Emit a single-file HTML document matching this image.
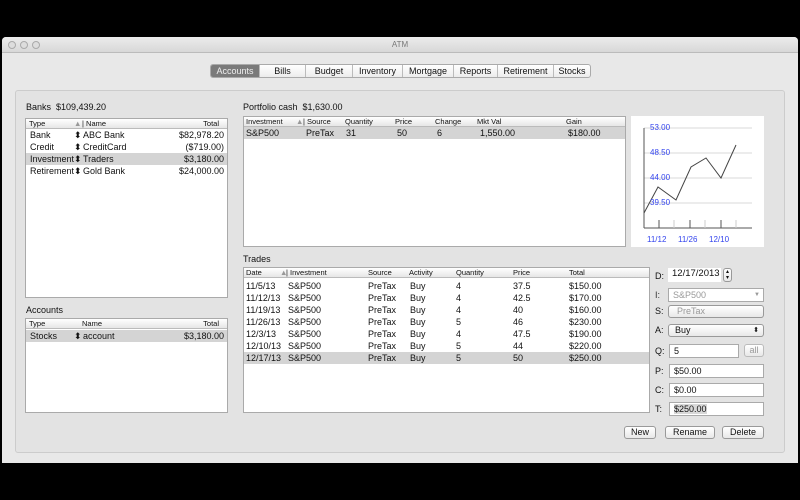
<!DOCTYPE html>
<html><head><meta charset="utf-8"><style>
*{margin:0;padding:0;box-sizing:border-box}
body{width:800px;height:500px;background:#000;position:relative;overflow:hidden;font-family:"Liberation Sans",sans-serif;font-size:9px;color:#111}
.a{position:absolute}
.win{left:2px;top:37px;width:796px;height:426px;background:#e8e8e8;border-radius:4px 4px 0 0}
.title{left:0;top:0;width:796px;height:16px;background:linear-gradient(#ececec,#d8d8d8);border-bottom:1px solid #bbb;border-radius:4px 4px 0 0;text-align:center;line-height:16px;color:#777;font-size:8px}
.dot{width:8px;height:8px;border-radius:50%;border:1px solid #aaa;background:#ddd;top:4px}
.tabs{left:210px;top:64px;height:14px;display:flex;border:1px solid #aaa;border-radius:3px;background:linear-gradient(#fff,#ececec);overflow:hidden}
.tabs div{line-height:12px;border-right:1px solid #bbb;font-size:9px;text-align:center}
.tabs div:last-child{border-right:0}
.tabs .on{background:#7a7a7a;color:#eee}
.box{left:15px;top:90px;width:770px;height:363px;border:1px solid #ccc;border-radius:3px;background:#e3e3e3}
.tbl{background:#fff;border:1px solid #aaa}
.hd{position:absolute;left:0;top:0;right:0;height:10px;background:linear-gradient(#fff,#e6e6e6);border-bottom:1px solid #bbb;font-size:7.5px;line-height:10px}
.hd span,.row span{position:absolute}
.row{position:absolute;left:0;right:0;height:12px;line-height:12px;font-size:9px}
.sel{background:#d4d4d4}
.lbl{font-size:9px}
.fld{background:#fff;border:1px solid #aaa;height:14px;line-height:12px;padding-left:4px;font-size:9px}
.btn{background:linear-gradient(#fff,#e8e8e8);border:1px solid #999;border-radius:3px;height:13px;line-height:11px;text-align:center;font-size:9px}
</style></head><body>
<div class="a win">
 <div class="a title">ATM</div>
 <div class="a dot" style="left:6px"></div><div class="a dot" style="left:18px"></div><div class="a dot" style="left:30px"></div>
</div>
<div class="a tabs"><div class="on" style="width:49px">Accounts</div><div style="width:46px">Bills</div><div style="width:47px">Budget</div><div style="width:50px">Inventory</div><div style="width:51px">Mortgage</div><div style="width:44px">Reports</div><div style="width:56px">Retirement</div><div style="width:36px">Stocks</div></div>
<div class="a box"></div>

<div class="a lbl" style="left:26px;top:102px">Banks &nbsp;$109,439.20</div>
<div class="a tbl" style="left:25px;top:118px;width:203px;height:180px">
 <div class="hd"><span style="left:3px">Type</span><span style="left:48px;color:#999">▲</span><span style="left:56px">| Name</span><span style="right:8px">Total</span></div>
 <div class="row" style="top:10px"><span style="left:4px">Bank</span><span style="left:48px">⬍</span><span style="left:57px">ABC Bank</span><span style="right:3px">$82,978.20</span></div>
 <div class="row" style="top:22px"><span style="left:4px">Credit</span><span style="left:48px">⬍</span><span style="left:57px">CreditCard</span><span style="right:3px">($719.00)</span></div>
 <div class="row sel" style="top:34px"><span style="left:4px">Investment</span><span style="left:48px">⬍</span><span style="left:57px">Traders</span><span style="right:3px">$3,180.00</span></div>
 <div class="row" style="top:46px"><span style="left:4px">Retirement</span><span style="left:48px">⬍</span><span style="left:57px">Gold Bank</span><span style="right:3px">$24,000.00</span></div>
</div>

<div class="a lbl" style="left:26px;top:305px">Accounts</div>
<div class="a tbl" style="left:25px;top:318px;width:203px;height:95px">
 <div class="hd"><span style="left:3px">Type</span><span style="left:56px">Name</span><span style="right:8px">Total</span></div>
 <div class="row sel" style="top:11px"><span style="left:4px">Stocks</span><span style="left:48px">⬍</span><span style="left:57px">account</span><span style="right:3px">$3,180.00</span></div>
</div>

<div class="a lbl" style="left:243px;top:102px">Portfolio cash &nbsp;$1,630.00</div>
<div class="a tbl" style="left:243px;top:116px;width:383px;height:131px">
 <div class="hd"><span style="left:2px">Investment</span><span style="left:52px;color:#999">▲</span><span style="left:59px">| Source</span><span style="left:101px">Quantity</span><span style="left:151px">Price</span><span style="left:191px">Change</span><span style="left:233px">Mkt Val</span><span style="left:322px">Gain</span></div>
 <div class="row sel" style="top:10px"><span style="left:2px">S&amp;P500</span><span style="left:62px">PreTax</span><span style="left:102px">31</span><span style="left:153px">50</span><span style="left:193px">6</span><span style="left:236px">1,550.00</span><span style="left:324px">$180.00</span></div>
</div>

<div class="a" style="left:631px;top:116px;width:133px;height:131px;background:#fff"></div>
<svg class="a" style="left:0;top:0" width="800" height="500">
 <g stroke="#ccc" stroke-width="0.7"><line x1="644" y1="128" x2="752" y2="128"/><line x1="644" y1="153" x2="752" y2="153"/><line x1="644" y1="178" x2="752" y2="178"/><line x1="644" y1="203" x2="752" y2="203"/></g>
 <line x1="644" y1="128" x2="644" y2="228" stroke="#555"/>
 <line x1="644" y1="228" x2="752" y2="228" stroke="#555"/>
 <g stroke="#555"><line x1="659" y1="220" x2="659" y2="228"/><line x1="690" y1="220" x2="690" y2="228"/><line x1="721" y1="220" x2="721" y2="228"/></g>
 <g stroke="#ccc"><line x1="674" y1="220" x2="674" y2="228"/><line x1="705" y1="220" x2="705" y2="228"/><line x1="736" y1="220" x2="736" y2="228"/></g>
 <polyline points="644,213 658,187 676,200 691,167 706,158 721,178 736,145" fill="none" stroke="#444" stroke-width="1"/>
 <g fill="#3344ee" font-size="8" font-family="Liberation Sans"><text x="650" y="130">53.00</text><text x="650" y="155">48.50</text><text x="650" y="180">44.00</text><text x="650" y="205">39.50</text><text x="647" y="242">11/12</text><text x="678" y="242">11/26</text><text x="709" y="242">12/10</text></g>
</svg>

<div class="a lbl" style="left:243px;top:254px">Trades</div>
<div class="a tbl" style="left:243px;top:267px;width:407px;height:146px">
 <div class="hd"><span style="left:2px">Date</span><span style="left:36px;color:#999">▲</span><span style="left:42px">| Investment</span><span style="left:124px">Source</span><span style="left:165px">Activity</span><span style="left:212px">Quantity</span><span style="left:269px">Price</span><span style="left:325px">Total</span></div>
 <div class="row" style="top:12px"><span style="left:2px">11/5/13</span><span style="left:44px">S&amp;P500</span><span style="left:124px">PreTax</span><span style="left:166px">Buy</span><span style="left:212px">4</span><span style="left:269px">37.5</span><span style="left:325px">$150.00</span></div>
 <div class="row" style="top:24px"><span style="left:2px">11/12/13</span><span style="left:44px">S&amp;P500</span><span style="left:124px">PreTax</span><span style="left:166px">Buy</span><span style="left:212px">4</span><span style="left:269px">42.5</span><span style="left:325px">$170.00</span></div>
 <div class="row" style="top:36px"><span style="left:2px">11/19/13</span><span style="left:44px">S&amp;P500</span><span style="left:124px">PreTax</span><span style="left:166px">Buy</span><span style="left:212px">4</span><span style="left:269px">40</span><span style="left:325px">$160.00</span></div>
 <div class="row" style="top:48px"><span style="left:2px">11/26/13</span><span style="left:44px">S&amp;P500</span><span style="left:124px">PreTax</span><span style="left:166px">Buy</span><span style="left:212px">5</span><span style="left:269px">46</span><span style="left:325px">$230.00</span></div>
 <div class="row" style="top:60px"><span style="left:2px">12/3/13</span><span style="left:44px">S&amp;P500</span><span style="left:124px">PreTax</span><span style="left:166px">Buy</span><span style="left:212px">4</span><span style="left:269px">47.5</span><span style="left:325px">$190.00</span></div>
 <div class="row" style="top:72px"><span style="left:2px">12/10/13</span><span style="left:44px">S&amp;P500</span><span style="left:124px">PreTax</span><span style="left:166px">Buy</span><span style="left:212px">5</span><span style="left:269px">44</span><span style="left:325px">$220.00</span></div>
 <div class="row sel" style="top:84px"><span style="left:2px">12/17/13</span><span style="left:44px">S&amp;P500</span><span style="left:124px">PreTax</span><span style="left:166px">Buy</span><span style="left:212px">5</span><span style="left:269px">50</span><span style="left:325px">$250.00</span></div>
</div>

<div class="a lbl" style="left:655px;top:271px">D:</div>
<div class="a fld" style="left:668px;top:268px;width:53px;border:0;background:#fff;font-size:9.5px">12/17/2013</div>
<div class="a btn" style="left:723px;top:268px;width:9px;height:14px;font-size:6px;line-height:6px">▴<br>▾</div>
<div class="a lbl" style="left:655px;top:290px;color:#333">I:</div>
<div class="a fld" style="left:668px;top:288px;width:96px;color:#999">S&amp;P500<span style="position:absolute;right:3px;font-size:6px">▼</span></div>
<div class="a lbl" style="left:655px;top:306px">S:</div>
<div class="a btn" style="left:668px;top:305px;width:96px;color:#999;text-align:left;padding-left:8px">PreTax</div>
<div class="a lbl" style="left:655px;top:325px">A:</div>
<div class="a btn" style="left:668px;top:324px;width:96px;text-align:left;padding-left:6px">Buy<span style="position:absolute;right:4px;font-size:7px">⬍</span></div>
<div class="a lbl" style="left:655px;top:346px">Q:</div>
<div class="a fld" style="left:669px;top:344px;width:70px">5</div>
<div class="a btn" style="left:744px;top:344px;width:20px;color:#999;border-color:#bbb">all</div>
<div class="a lbl" style="left:655px;top:366px">P:</div>
<div class="a fld" style="left:669px;top:364px;width:95px">$50.00</div>
<div class="a lbl" style="left:655px;top:385px">C:</div>
<div class="a fld" style="left:669px;top:383px;width:95px">$0.00</div>
<div class="a lbl" style="left:655px;top:404px">T:</div>
<div class="a fld" style="left:669px;top:402px;width:95px"><span style="background:#d8d8d8">$250.00</span></div>
<div class="a btn" style="left:624px;top:426px;width:32px">New</div>
<div class="a btn" style="left:665px;top:426px;width:50px">Rename</div>
<div class="a btn" style="left:722px;top:426px;width:42px">Delete</div>
</body></html>
